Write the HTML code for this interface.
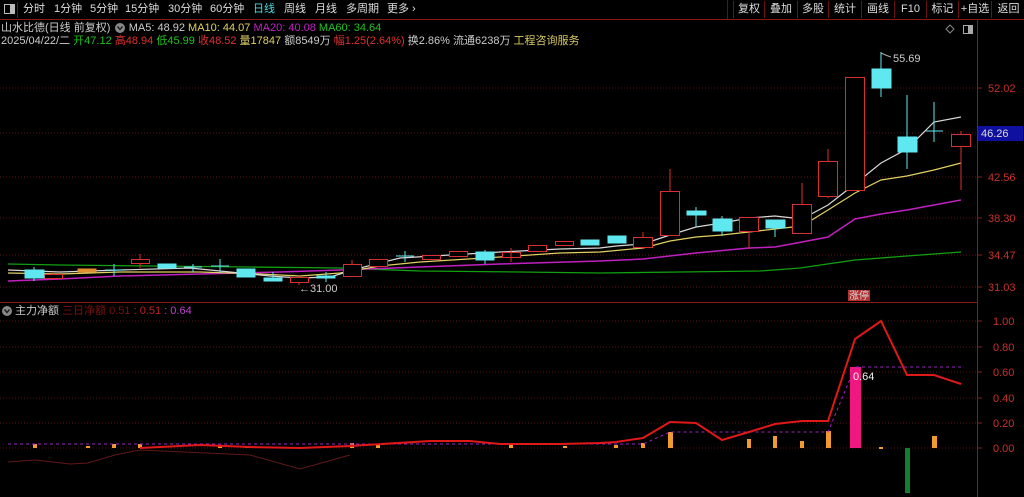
<!DOCTYPE html>
<html><head><meta charset="utf-8"><style>
*{margin:0;padding:0}
body{width:1024px;height:497px;background:#000;overflow:hidden;font-family:"Liberation Sans","Noto Sans CJK SC",sans-serif;position:relative}
.t{position:absolute;font-size:11px;white-space:nowrap;line-height:13px}
.tab{position:absolute;top:3px;font-size:11px;color:#ddd;white-space:nowrap;line-height:13px}
.btn{position:absolute;top:1px;height:17px;font-size:11px;color:#ddd;line-height:17px;text-align:center;border-left:1px solid #6a1010}
</style></head><body>
<svg width="1024" height="497" style="position:absolute;left:0;top:0" font-family="Liberation Sans,Noto Sans CJK SC,sans-serif">
<line x1="0" y1="19.5" x2="1024" y2="19.5" stroke="#8a1a1a"/>
<line x1="977.5" y1="20" x2="977.5" y2="497" stroke="#8a1a1a"/>
<line x1="0" y1="302.5" x2="977" y2="302.5" stroke="#8a1a1a"/>
<line x1="727.5" y1="0" x2="727.5" y2="19" stroke="#6a1010"/>
<line x1="17.5" y1="2" x2="17.5" y2="18" stroke="#6a1010"/>
<g stroke="#5a1010" stroke-dasharray="1,2">
<line x1="0" y1="88" x2="977" y2="88"/><line x1="0" y1="133" x2="977" y2="133"/><line x1="0" y1="177" x2="977" y2="177"/><line x1="0" y1="218" x2="977" y2="218"/><line x1="0" y1="255" x2="977" y2="255"/><line x1="0" y1="287" x2="977" y2="287"/>
<line x1="0" y1="321" x2="977" y2="321"/><line x1="0" y1="347" x2="977" y2="347"/><line x1="0" y1="372" x2="977" y2="372"/><line x1="0" y1="398" x2="977" y2="398"/><line x1="0" y1="423" x2="977" y2="423"/><line x1="0" y1="448" x2="977" y2="448"/>
</g>
<g stroke="#8a1a1a"><line x1="977" y1="88" x2="982" y2="88"/><line x1="977" y1="177" x2="982" y2="177"/><line x1="977" y1="218" x2="982" y2="218"/><line x1="977" y1="255" x2="982" y2="255"/><line x1="977" y1="287" x2="982" y2="287"/>
<line x1="977" y1="321" x2="982" y2="321"/><line x1="977" y1="347" x2="982" y2="347"/><line x1="977" y1="372" x2="982" y2="372"/><line x1="977" y1="398" x2="982" y2="398"/><line x1="977" y1="423" x2="982" y2="423"/><line x1="977" y1="448" x2="982" y2="448"/></g>
<g fill="#c8302c" font-size="11">
<text x="988" y="92">52.02</text><text x="988" y="181">42.56</text><text x="988" y="222">38.30</text><text x="988" y="259">34.47</text><text x="988" y="291">31.03</text>
<text x="993" y="325">1.00</text><text x="993" y="351">0.80</text><text x="993" y="376">0.60</text><text x="993" y="402">0.40</text><text x="993" y="427">0.20</text><text x="993" y="452">0.00</text>
</g>
<rect x="978" y="126" width="45" height="15" fill="#1010a0"/>
<text x="981" y="137" fill="#ddd" font-size="11">46.26</text>
<polyline fill="none" stroke="#10a010" stroke-width="1.3" points="8,264 60,265 150,266 250,267 340,268 420,271 520,272 600,273 680,272 760,271 800,268 855,260 907,256 961,252"/>
<polyline fill="none" stroke="#c020c0" stroke-width="1.5" points="8,281 60,279 120,276 200,274 280,272 340,270 420,267 500,264 600,261 643,259 696,253 749,248 775,247 802,242 828,237 855,219 881,214 907,210 961,200"/>
<polyline fill="none" stroke="#e0d060" stroke-width="1.2" points="8,273 60,274 120,272 200,272 260,274 300,276 340,273 380,266 420,262 500,257 560,253 600,252 643,248 670,241 696,237 722,235 749,232 775,229 802,226 828,210 855,193 881,180 907,176 934,170 961,163"/>
<polyline fill="none" stroke="#d8d8d8" stroke-width="1.2" points="8,270 60,272 120,270 190,268 230,272 270,276 300,278 330,277 360,268 400,258 450,255 500,252 560,249 600,248 616,246 643,244 670,235 696,227 722,223 749,218 775,216 802,219 828,205 855,184 881,163 907,149 934,122 961,117"/>
<g stroke-width="1">
<g fill="#000" stroke="#d83030">
<line x1="53" y1="272" x2="53" y2="280"/><rect x="44.5" y="274.5" width="18" height="4"/>
<line x1="140" y1="254" x2="140" y2="268"/><rect x="131.5" y="259.5" width="18" height="4"/>
<line x1="299" y1="275" x2="299" y2="285"/><rect x="290.5" y="277.5" width="18" height="5"/>
<rect x="343.5" y="264.5" width="18" height="12"/><line x1="352" y1="260" x2="352" y2="264"/>
<rect x="369.5" y="259.5" width="18" height="7"/>
<rect x="422.5" y="255.5" width="18" height="4"/>
<rect x="449.5" y="251.5" width="18" height="5"/>
<rect x="502.5" y="252.5" width="18" height="5"/><line x1="511" y1="248" x2="511" y2="262"/>
<rect x="528.5" y="245.5" width="18" height="6"/>
<rect x="555.5" y="241.5" width="18" height="4"/>
<line x1="643" y1="232" x2="643" y2="249"/><rect x="633.5" y="237.5" width="19" height="10"/>
<line x1="670" y1="169" x2="670" y2="191"/><rect x="660.5" y="191.5" width="19" height="44"/>
<line x1="749" y1="231" x2="749" y2="249"/><rect x="739.5" y="217.5" width="19" height="14"/>
<line x1="802" y1="183" x2="802" y2="204"/><rect x="792.5" y="204.5" width="19" height="29"/>
<line x1="828" y1="149" x2="828" y2="161"/><line x1="828" y1="196" x2="828" y2="198"/><rect x="818.5" y="161.5" width="19" height="35"/>
<rect x="845.5" y="77.5" width="19" height="113"/>
<line x1="961" y1="131" x2="961" y2="134"/><line x1="961" y1="146" x2="961" y2="190"/><rect x="951.5" y="134.5" width="19" height="12"/>
</g>
<g fill="#5fe8f0" stroke="#5fe8f0">
<line x1="34" y1="267" x2="34" y2="281"/><rect x="25" y="270" width="19" height="8"/>
<rect x="78" y="269" width="18" height="3" fill="#e09030" stroke="#e09030"/>
<line x1="114" y1="264" x2="114" y2="276"/><line x1="105" y1="270" x2="123" y2="270"/>
<rect x="158" y="264" width="18" height="4"/>
<line x1="193" y1="264" x2="193" y2="272"/><line x1="184" y1="267" x2="202" y2="267"/>
<line x1="220" y1="259" x2="220" y2="273"/><line x1="211" y1="266" x2="229" y2="266"/>
<rect x="237" y="269" width="18" height="8"/>
<line x1="273" y1="272" x2="273" y2="281"/><rect x="264" y="278" width="18" height="3"/>
<line x1="326" y1="272" x2="326" y2="282"/><rect x="317" y="276" width="18" height="2"/>
<line x1="405" y1="251" x2="405" y2="262"/><line x1="396" y1="256" x2="414" y2="256"/>
<line x1="485" y1="250" x2="485" y2="264"/><rect x="476" y="252" width="18" height="8"/>
<rect x="581" y="240" width="18" height="5"/>
<rect x="608" y="236" width="18" height="7"/>
<line x1="696" y1="207" x2="696" y2="227"/><rect x="687" y="211" width="19" height="4"/>
<line x1="722" y1="216" x2="722" y2="236"/><rect x="713" y="219" width="19" height="12"/>
<line x1="775" y1="228" x2="775" y2="237"/><rect x="766" y="220" width="19" height="8"/>
<line x1="881" y1="52" x2="881" y2="97"/><rect x="872" y="69" width="19" height="19"/>
<line x1="907" y1="95" x2="907" y2="169"/><rect x="898" y="137" width="19" height="15"/>
<line x1="934" y1="102" x2="934" y2="142"/><line x1="925" y1="131" x2="943" y2="131"/>
</g>
</g>
<path d="M881 53 Q885 55 891 57" stroke="#aaa" fill="none"/>
<text x="893" y="62" fill="#ccc" font-size="11">55.69</text>
<text x="299" y="292" fill="#ccc" font-size="11">←31.00</text>
<rect x="848" y="290" width="22" height="11" fill="#b03030"/>
<text x="849" y="299" fill="#ddd" font-size="10">涨停</text>
<g fill="#f09a30">
<rect x="33" y="444" width="4" height="4"/><rect x="86" y="446" width="4" height="2"/><rect x="112" y="444" width="4" height="4"/><rect x="138" y="444" width="4" height="4"/><rect x="218" y="446" width="4" height="2"/><rect x="245" y="446" width="4" height="2"/><rect x="350" y="443" width="4" height="5"/><rect x="376" y="444" width="4" height="4"/><rect x="509" y="445" width="4" height="3"/><rect x="563" y="446" width="4" height="2"/>
<rect x="614" y="445" width="4" height="3"/><rect x="641" y="443" width="4" height="5"/><rect x="668" y="432" width="5" height="16"/><rect x="747" y="439" width="4" height="9"/><rect x="773" y="436" width="4" height="12"/><rect x="800" y="441" width="4" height="7"/><rect x="826" y="431" width="5" height="17"/><rect x="879" y="447" width="4" height="2"/><rect x="932" y="436" width="5" height="12"/>
</g>
<rect x="850" y="367" width="11" height="81" fill="#f01880"/>
<rect x="905" y="448" width="5" height="45" fill="#108030"/>
<polyline fill="none" stroke="#a020c0" stroke-dasharray="3,3" points="8,444 643,444 670,432 828,432 855,367 961,367"/>
<polyline fill="none" stroke="#601818" stroke-width="1" points="8,462 35,460 70,464 88,463 115,455 140,450 250,455 300,469 350,455"/>
<polyline fill="none" stroke="#e01818" stroke-width="2" points="140,448 200,445 250,447 300,448 350,446 430,441 470,441 500,444 560,444 600,443 616,442 643,438 670,422 696,423 722,440 749,432 775,424 802,421 828,421 855,339 881,321 907,375 934,375 961,384"/>
<text x="853" y="380" fill="#eee" font-size="11">0.64</text>
<rect x="4.5" y="4.5" width="10" height="9" fill="none" stroke="#bbb"/><rect x="10" y="5" width="4" height="8" fill="#bbb"/>
<path d="M950 25 L954 29 L950 33 L946 29Z" fill="none" stroke="#888"/>
<rect x="963.5" y="25.5" width="9" height="8" fill="none" stroke="#aaa"/><rect x="968" y="26" width="4" height="7" fill="#aaa"/>
<circle cx="7" cy="311" r="5" fill="#888"/><path d="M4.5 309.5 L7 312.5 L9.5 309.5" stroke="#222" fill="none" stroke-width="1.5"/>
<circle cx="120" cy="28" r="5" fill="#888"/><path d="M117.5 26.5 L120 29.5 L122.5 26.5" stroke="#222" fill="none" stroke-width="1.5"/>
</svg>
<div class="tab" style="left:23px">分时</div>
<div class="tab" style="left:54px">1分钟</div>
<div class="tab" style="left:90px">5分钟</div>
<div class="tab" style="left:125px">15分钟</div>
<div class="tab" style="left:168px">30分钟</div>
<div class="tab" style="left:210px">60分钟</div>
<div class="tab" style="left:253px;color:#4ad8e0">日线</div>
<div class="tab" style="left:284px">周线</div>
<div class="tab" style="left:315px">月线</div>
<div class="tab" style="left:346px">多周期</div>
<div class="tab" style="left:387px">更多 ›</div>
<div class="btn" style="left:733px;width:30px">复权</div>
<div class="btn" style="left:764px;width:32px">叠加</div>
<div class="btn" style="left:797px;width:30px">多股</div>
<div class="btn" style="left:828px;width:32px">统计</div>
<div class="btn" style="left:861px;width:32px">画线</div>
<div class="btn" style="left:894px;width:31px">F10</div>
<div class="btn" style="left:926px;width:31px">标记</div>
<div class="btn" style="left:958px;width:32px">+自选</div>
<div class="btn" style="left:991px;width:33px">返回</div>
<div class="t" style="left:1px;top:22px;color:#ccc">山水比德(日线 前复权)&nbsp;&nbsp;&nbsp;&nbsp;&nbsp; MA5: 48.92 <span style="color:#e0d060">MA10: 44.07</span> <span style="color:#c020c0">MA20: 40.08</span> <span style="color:#20c020">MA60: 34.64</span></div>
<div class="t" style="left:1px;top:35px;color:#ccc">2025/04/22/二 <span style="color:#20c020">开47.12</span> <span style="color:#e03030">高48.94</span> <span style="color:#20c020">低45.99</span> <span style="color:#e03030">收48.52</span> <span style="color:#e0d060">量17847</span> 额8549万 <span style="color:#e03030">幅1.25(2.64%)</span> 换2.86% 流通6238万 <span style="color:#d8c860">工程咨询服务</span></div>
<div class="t" style="left:15px;top:305px;color:#ccc">主力净额 <span style="color:#7a1010">三日净额 0.51</span> <span style="color:#c02020">: 0.51</span> <span style="color:#c040d0">: 0.64</span></div>
</body></html>
